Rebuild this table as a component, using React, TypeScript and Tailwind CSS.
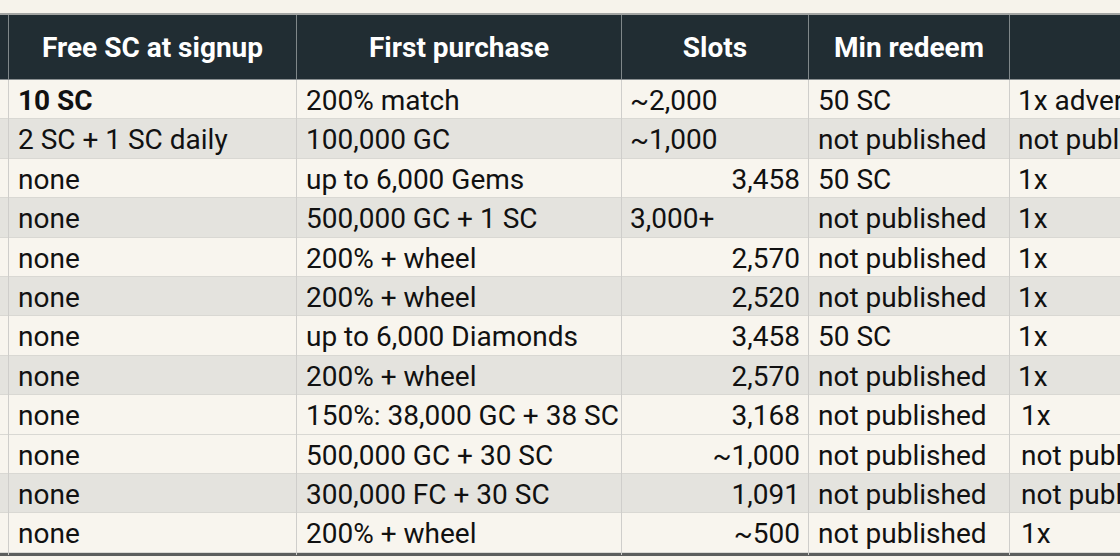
import React from "react";

type Row = {
  free: string;
  freeBold?: boolean;
  first: string;
  slots: string;
  slotsRight: boolean;
  min: string;
  last: string;
  lastIndent?: boolean;
  shaded: boolean;
};

const rows: Row[] = [
  { free: "10 SC", freeBold: true, first: "200% match", slots: "~2,000", slotsRight: false, min: "50 SC", last: "1x advertised", shaded: false },
  { free: "2 SC + 1 SC daily", first: "100,000 GC", slots: "~1,000", slotsRight: false, min: "not published", last: "not published", shaded: true },
  { free: "none", first: "up to 6,000 Gems", slots: "3,458", slotsRight: true, min: "50 SC", last: "1x", shaded: false },
  { free: "none", first: "500,000 GC + 1 SC", slots: "3,000+", slotsRight: false, min: "not published", last: "1x", shaded: true },
  { free: "none", first: "200% + wheel", slots: "2,570", slotsRight: true, min: "not published", last: "1x", shaded: false },
  { free: "none", first: "200% + wheel", slots: "2,520", slotsRight: true, min: "not published", last: "1x", shaded: true },
  { free: "none", first: "up to 6,000 Diamonds", slots: "3,458", slotsRight: true, min: "50 SC", last: "1x", shaded: false },
  { free: "none", first: "200% + wheel", slots: "2,570", slotsRight: true, min: "not published", last: "1x", shaded: true },
  { free: "none", first: "150%: 38,000 GC + 38 SC", slots: "3,168", slotsRight: true, min: "not published", last: "1x", lastIndent: true, shaded: false },
  { free: "none", first: "500,000 GC + 30 SC", slots: "~1,000", slotsRight: true, min: "not published", last: "not published", lastIndent: true, shaded: false },
  { free: "none", first: "300,000 FC + 30 SC", slots: "1,091", slotsRight: true, min: "not published", last: "not published", lastIndent: true, shaded: true },
  { free: "none", first: "200% + wheel", slots: "~500", slotsRight: true, min: "not published", last: "1x", lastIndent: true, shaded: false },
];

const grid = "grid grid-cols-[9px_288px_325px_187px_201px_320px]";

export default function App() {
  return (
    <div className="w-[1120px] h-[560px] overflow-hidden bg-[#f6f3eb] font-['Roboto','Liberation_Sans',sans-serif] text-[28px] text-[#111111]">
      <div className="pt-[13px] w-[1330px]">
        <div className="border-t-2 border-[#a3a5a3]">
          <div className={`${grid} h-[65px] bg-[#212d33] text-white font-bold border-b border-[#8a9092]`}>
            <div className="border-r border-[#7f8789]" />
            <div className="border-r border-[#7f8789] flex items-center justify-center pt-[1px]">Free SC at signup</div>
            <div className="border-r border-[#7f8789] flex items-center justify-center pt-[1px]">First purchase</div>
            <div className="border-r border-[#7f8789] flex items-center justify-center pt-[1px]">Slots</div>
            <div className="border-r border-[#7f8789] flex items-center justify-center pt-[1px]">Min redeem</div>
            <div />
          </div>
          {rows.map((r, i) => (
            <div
              key={i}
              className={`${grid} h-[39.4px] border-b border-[#d9d8d3] ${r.shaded ? "bg-[#e4e3de]" : "bg-[#f8f5ee]"}`}
            >
              <div className="border-r border-[#cfcecb]" />
              <div className={`border-r border-[#cfcecb] flex items-center pl-[9px] whitespace-nowrap ${r.freeBold ? "font-bold" : ""}`}>{r.free}</div>
              <div className="border-r border-[#cfcecb] flex items-center pl-[9px] whitespace-nowrap">{r.first}</div>
              <div className={`border-r border-[#cfcecb] flex items-center whitespace-nowrap ${r.slotsRight ? "justify-end pr-[8px]" : "pl-[8px]"}`}>{r.slots}</div>
              <div className="border-r border-[#cfcecb] flex items-center pl-[9px] whitespace-nowrap">{r.min}</div>
              <div className={`flex items-center whitespace-nowrap ${r.lastIndent ? "pl-[11px]" : "pl-[8px]"}`}>{r.last}</div>
            </div>
          ))}
          <div className="h-[3px] bg-[#5b5d5c]" />
        </div>
      </div>
    </div>
  );
}
